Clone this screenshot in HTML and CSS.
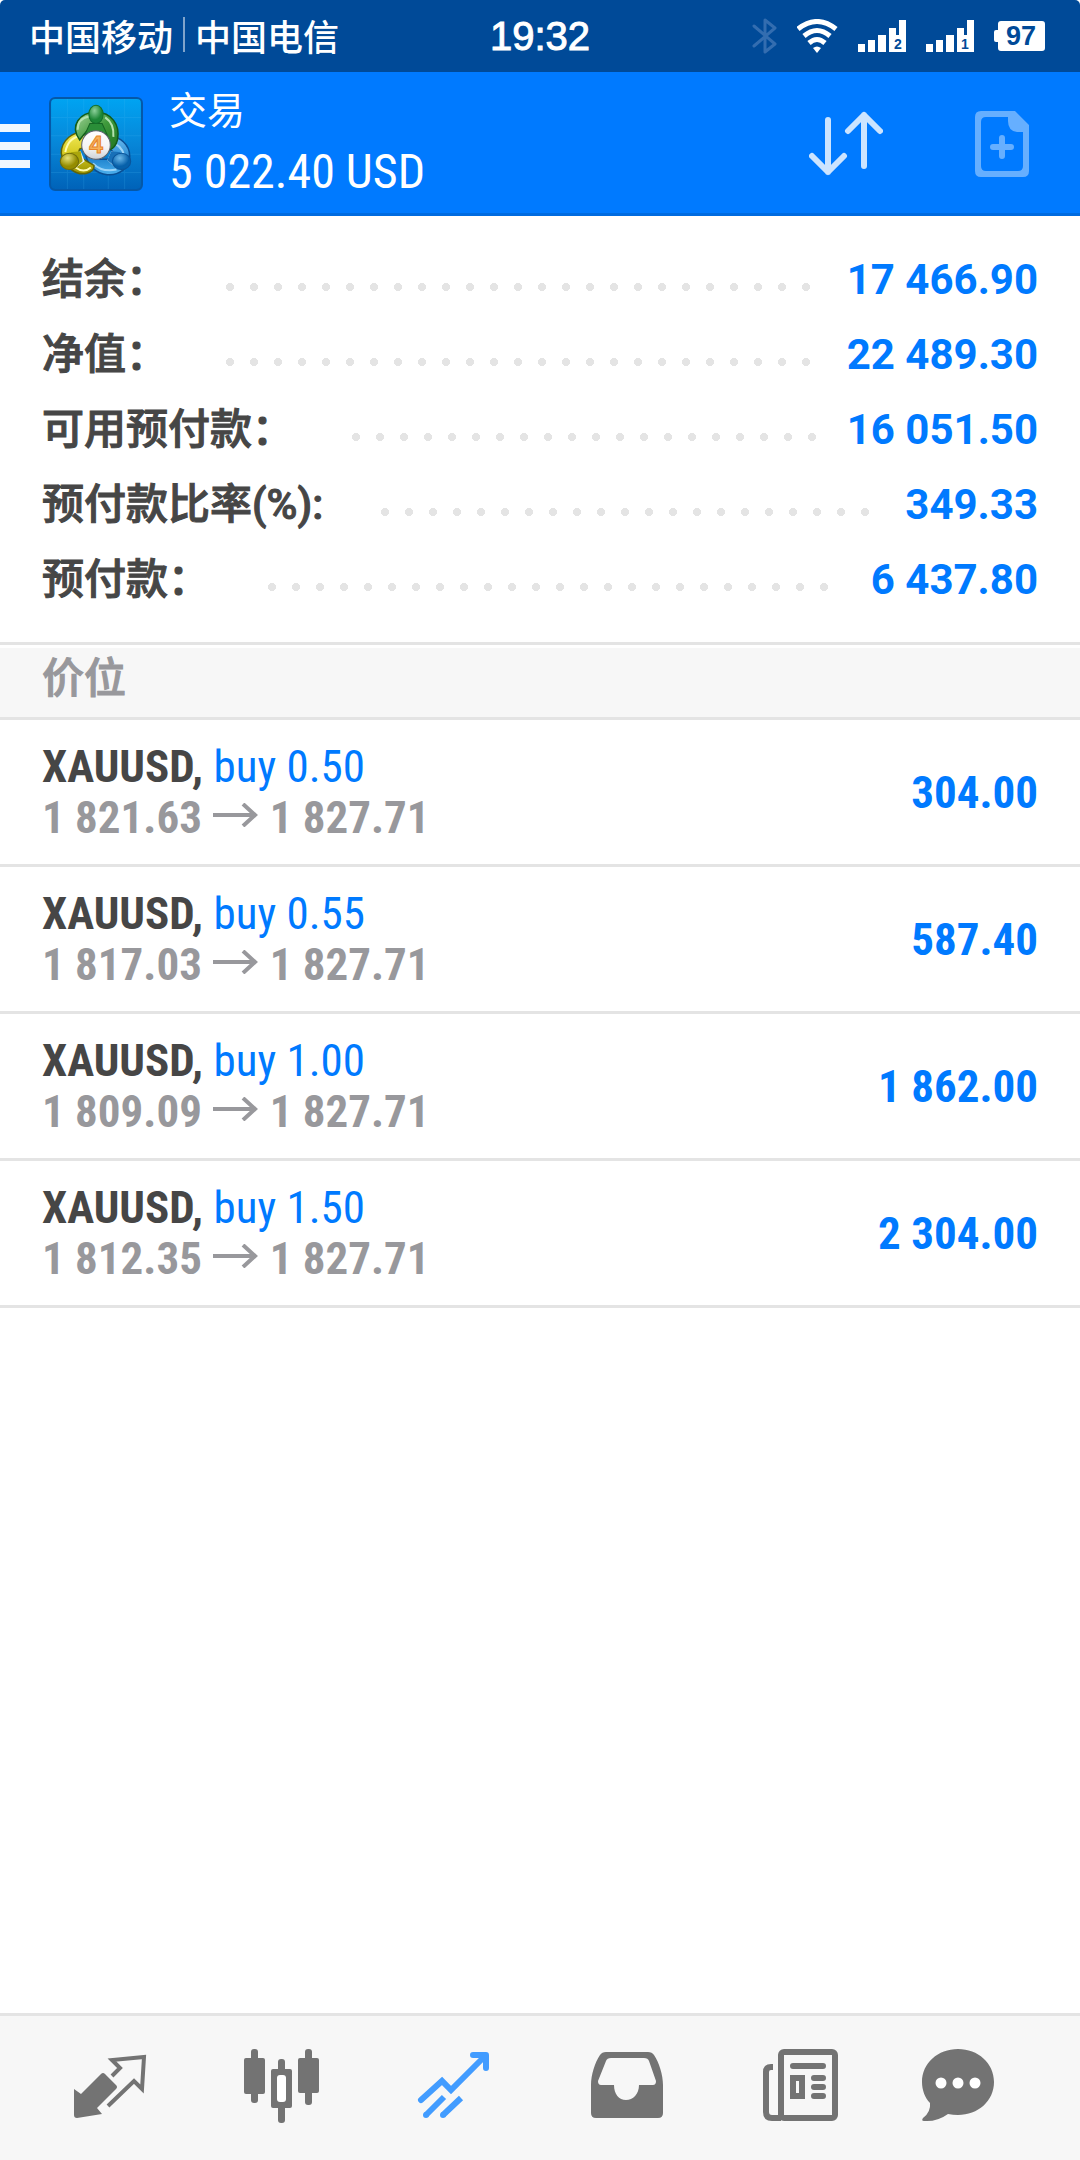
FILE: index.html
```html
<!DOCTYPE html>
<html lang="zh-CN">
<head>
<meta charset="utf-8">
<meta name="viewport" content="width=device-width, initial-scale=1">
<title>交易</title>
<link rel="stylesheet" href="styles.css">
</head>
<body>
<div class="status-bar">
  <div class="carriers"><span>中国移动</span><span class="divider"></span><span>中国电信</span></div>
  <time class="clock">19:32</time>
  <div class="indicators">
    <svg class="bluetooth" width="26" height="36" viewBox="0 0 26 36"><path d="M3 8 24 26 14 34V2L24 10 3 28" fill="none" stroke="#336db0" stroke-width="3" stroke-linecap="round" stroke-linejoin="round"/></svg>
    <svg class="wifi" width="41" height="34" viewBox="0 0 41 34"><g fill="none" stroke="#fff" stroke-width="5"><path d="M1 10Q20-5 39 10"/><path d="M7 17Q20 6 33 17"/><path d="M12 24Q20 17 28 24"/></g><path d="M16 29Q20 26 24 29L20 34Z" fill="#fff"/></svg>
    <svg class="signal" width="48" height="32" viewBox="0 0 48 32"><path d="M0 24h7v8H0zM10 20h7v12h-7zM20 15h8v17h-8zM31 8h7v7h3V0h7v32H31z" fill="#fff"/><text x="40" y="29" class="sim">2</text></svg>
    <svg class="signal" width="48" height="32" viewBox="0 0 48 32"><path d="M0 24h7v8H0zM10 20h7v12h-7zM20 15h8v17h-8zM31 8h7v7h3V0h7v32H31z" fill="#fff"/><text x="39" y="29" class="sim">1</text></svg>
    <svg class="battery" width="51" height="30" viewBox="0 0 51 30"><path d="M7 0H48Q51 0 51 3V27Q51 30 48 30H7Q4 30 4 27V21H2Q0 21 0 19V11Q0 9 2 9H4V3Q4 0 7 0Z" fill="#fff"/><text x="27" y="24" class="charge">97</text></svg>
  </div>
</div>

<header class="app-bar">
  <button class="menu" aria-label="菜单"><svg width="30" height="44" viewBox="0 0 30 44"><path d="M0 0H30V8H0zM0 18H30V26H0zM0 36H30V44H0z" fill="#f0f7ff"/></svg></button>
  <svg class="logo" width="94" height="94" viewBox="0 0 92 92">
    <defs>
      <linearGradient id="bg" x1="0" y1="0" x2="0" y2="1"><stop offset="0" stop-color="#00a4f2"/><stop offset=".5" stop-color="#0786d8"/><stop offset="1" stop-color="#0062b8"/></linearGradient>
      <linearGradient id="gr" x1="0" y1="0" x2="1" y2="1"><stop offset="0" stop-color="#a5d49c"/><stop offset=".5" stop-color="#3f9a3c"/><stop offset="1" stop-color="#1f7420"/></linearGradient>
      <linearGradient id="ye" x1="0" y1="0" x2="0" y2="1"><stop offset="0" stop-color="#f2ea58"/><stop offset=".5" stop-color="#d6cb22"/><stop offset="1" stop-color="#999100"/></linearGradient>
      <linearGradient id="bl" x1="0" y1="0" x2="0" y2="1"><stop offset="0" stop-color="#6cbcf0"/><stop offset=".6" stop-color="#2286d0"/><stop offset="1" stop-color="#4cb0ee"/></linearGradient>
      <radialGradient id="gh" cx=".4" cy=".3"><stop offset="0" stop-color="#8cd09a"/><stop offset="1" stop-color="#1d8636"/></radialGradient>
      <radialGradient id="yh" cx=".4" cy=".3"><stop offset="0" stop-color="#e6e278"/><stop offset="1" stop-color="#948c00"/></radialGradient>
      <radialGradient id="bh" cx=".4" cy=".3"><stop offset="0" stop-color="#6cb8ea"/><stop offset="1" stop-color="#0660aa"/></radialGradient>
      <linearGradient id="nu" x1="0" y1="0" x2="0" y2="1"><stop offset="0" stop-color="#fff"/><stop offset=".6" stop-color="#f4f4f4"/><stop offset="1" stop-color="#ccd0d6"/></linearGradient>
    </defs>
    <rect x="1" y="1" width="90" height="90" rx="5" fill="url(#bg)" stroke="#0558a8" stroke-width="2"/>
    <path d="M18 2V90M34 2V90M58 2V90M74 2V90M2 20H90M2 38H90M2 56H90M2 74H90" stroke="#4fbcf5" stroke-opacity=".18"/>
    <path d="M58 39C70 38 79 47 79 58C79 70 68 77 57 76C46 75 38 67 36 57L46 61L62 61Q68 56 58 50Z" fill="url(#bl)" stroke="#0a4f94" stroke-width="1.500"/>
    <path d="M59 44Q71 46 74 58M43 65Q52 74 66 71" fill="none" stroke="#9bd4f8" stroke-width="2"/>
    <path d="M38 35C23 32 12 43 12 55Q13 64 22 71C32 79 45 74 44 67L34 61Q27 57 30 51L40 47Z" fill="url(#ye)" stroke="#5f6408" stroke-width="1.500"/>
    <path d="M34 38Q19 38 16 54M26 69Q34 75 41 69" fill="none" stroke="#fffcae" stroke-width="2"/>
    <path d="M30 42C20 28 30 15 46 15C61 15 70 27 67 42Q65 50 59 52L50 35L46 30L39 31L34 37Z" fill="url(#gr)" stroke="#125c1a" stroke-width="1.500"/>
    <path d="M28 32Q28 21 39 19M55 20Q64 26 63 39" fill="none" stroke="#b4e2ae" stroke-width="2"/>
    <path d="M40 26L35 37Q46 30 57 37L52 26Z" fill="#2a8e38" stroke="#176624"/>
    <path d="M23 55L31 53L35 63L25 70ZM70 55L61 53L57 62L66 70Z" fill="#e8f2f8"/>
    <path d="M21 54L31 53L33 63L26 69Z" fill="#aba60c"/><path d="M70 54L61 53L57 62L66 69Z" fill="#1870b8"/>
    <ellipse cx="46" cy="17" rx="7" ry="9" fill="url(#gh)" stroke="#14702a"/>
    <ellipse cx="20" cy="63" rx="9" ry="8" fill="url(#yh)" stroke="#716d0a"/>
    <ellipse cx="71" cy="63" rx="9" ry="8" fill="url(#bh)" stroke="#0a549a"/>
    <circle cx="46" cy="47" r="14" fill="url(#nu)" stroke="#5d6470"/>
    <text x="46" y="55" class="logo-digit">4</text>
  </svg>
  <div class="titles"><h1>交易</h1><p>5 022.40 USD</p></div>
  <button aria-label="排序"><svg width="74" height="66" viewBox="0 0 74 66"><path d="M19 9V61M3 45 19 61 35 45M55 55V4M39 20 55 4 71 20" fill="none" stroke="#cce4ff" stroke-width="6" stroke-linecap="round" stroke-linejoin="round"/></svg></button>
  <button aria-label="新订单"><svg width="54" height="66" viewBox="0 0 54 66"><path fill-rule="evenodd" d="M6 0H40L54 14V60Q54 66 48 66H6Q0 66 0 60V6Q0 0 6 0ZM33 6H11Q6 6 6 11V55Q6 60 11 60H43Q48 60 48 55V21H42Q33 20 33 10Z" fill="#66afff"/><path d="M18 36H36M27 27V45" stroke="#66afff" stroke-width="6" stroke-linecap="round"/></svg></button>
</header>

<main>
  <dl class="summary">
    <div><dt>结余：</dt><dd>17 466.90</dd></div>
    <div><dt>净值：</dt><dd>22 489.30</dd></div>
    <div><dt>可用预付款：</dt><dd>16 051.50</dd></div>
    <div><dt>预付款比率(%):</dt><dd>349.33</dd></div>
    <div><dt>预付款：</dt><dd>6 437.80</dd></div>
  </dl>
  <h2>价位</h2>
  <ul class="positions">
    <li><div><p><b>XAUUSD,</b> <span class="side">buy 0.50</span></p><p class="prices">1 821.63 <svg class="to" width="45" height="24" viewBox="0 0 45 24"><path d="M0 12H42M30 1 42 12 30 23" fill="none" stroke="#98989c" stroke-width="4"/></svg> 1 827.71</p></div><strong>304.00</strong></li>
    <li><div><p><b>XAUUSD,</b> <span class="side">buy 0.55</span></p><p class="prices">1 817.03 <svg class="to" width="45" height="24" viewBox="0 0 45 24"><path d="M0 12H42M30 1 42 12 30 23" fill="none" stroke="#98989c" stroke-width="4"/></svg> 1 827.71</p></div><strong>587.40</strong></li>
    <li><div><p><b>XAUUSD,</b> <span class="side">buy 1.00</span></p><p class="prices">1 809.09 <svg class="to" width="45" height="24" viewBox="0 0 45 24"><path d="M0 12H42M30 1 42 12 30 23" fill="none" stroke="#98989c" stroke-width="4"/></svg> 1 827.71</p></div><strong>1 862.00</strong></li>
    <li><div><p><b>XAUUSD,</b> <span class="side">buy 1.50</span></p><p class="prices">1 812.35 <svg class="to" width="45" height="24" viewBox="0 0 45 24"><path d="M0 12H42M30 1 42 12 30 23" fill="none" stroke="#98989c" stroke-width="4"/></svg> 1 827.71</p></div><strong>2 304.00</strong></li>
  </ul>
</main>

<nav class="tabs">
  <a href="#quotes" aria-label="行情"><svg viewBox="0 0 80 80"><path d="M4 41 11 46 31 26Q33 24 35 26L46 37Q48 39 46 41L27 60 32 66 7 70Q4 70 4 67Z" fill="#737373"/><path d="M42 28 50 20 42 12 74 9 72 41 64 33 38 58" fill="none" stroke="#737373" stroke-width="4"/></svg></a>
  <a href="#charts" aria-label="图表"><svg viewBox="0 0 80 80"><g fill="#737373"><rect x="2" y="10" width="21" height="36" rx="2"/><rect x="9" y="1" width="7" height="54" rx="3"/><rect x="56" y="10" width="21" height="35" rx="2"/><rect x="63" y="1" width="7" height="56" rx="3"/><rect x="36" y="11" width="7" height="64" rx="3"/><rect x="29" y="21" width="21" height="39" rx="2"/></g><rect x="35" y="27" width="9" height="27" rx="3" fill="#fff"/></svg></a>
  <a href="#trade" aria-label="交易" aria-current="page"><svg viewBox="0 0 80 80"><g fill="none" stroke="#429cff" stroke-width="6"><path d="M7 52 28 33 37 42 71 8" stroke-linecap="round"/><path d="M59 7H72V20" stroke-linejoin="round" stroke-linecap="round"/><path d="M12 67 30 49M29 67 47 50"/></g><circle cx="12" cy="67" r="3" fill="#429cff"/><circle cx="29" cy="67" r="3" fill="#429cff"/></svg></a>
  <a href="#history" aria-label="历史"><svg viewBox="0 0 80 80"><path fill-rule="evenodd" d="M5 37C5 27 9 14 14 7Q16 4 20 4H62Q66 4 68 7C73 14 77 27 77 37V65Q77 70 72 70H10Q5 70 5 65ZM25 10Q21 10 20 13L12 33Q12 37 15 37H28C28 46 33 52 40 52S53 46 53 37H67Q70 37 70 33L63 13Q62 10 58 10Z" fill="#737373"/></svg></a>
  <a href="#news" aria-label="新闻"><svg viewBox="0 0 80 80"><g fill="none" stroke="#737373" stroke-width="6"><rect x="23" y="4" width="54" height="66" rx="3"/><path d="M15 19H13Q8 19 8 24V64Q8 70 14 70H23"/><path d="M35 18H65M56 30H65M56 39H65M56 48H65" stroke-linecap="round"/><rect x="35" y="30" width="9" height="18"/></g></svg></a>
  <a href="#chat" aria-label="聊天"><svg viewBox="0 0 80 80"><path d="M40 1C60 1 76 15 76 34S60 67 40 67Q35 67 30 66Q19 74 6 73Q3 73 5 70Q13 64 12 55C7 50 4 42 4 34C4 15 20 1 40 1Z" fill="#737373"/><g fill="#fff"><circle cx="23" cy="35" r="5.500"/><circle cx="40" cy="35" r="5.500"/><circle cx="57" cy="35" r="5.500"/></g></svg></a>
</nav>
</body>
</html>
```
FILE: styles.css
```css
* { box-sizing: border-box; margin: 0; padding: 0; }

body {
  min-height: 100vh;
  display: flex;
  flex-direction: column;
  background: #fff;
  color: #464646;
  font-family: Roboto, "Noto Sans CJK SC", sans-serif;
  font-size: 45px;
}

button { border: 0; background: none; display: flex; cursor: pointer; }
svg { display: block; flex: none; }

.status-bar {
  height: 72px;
  display: grid;
  grid-template-columns: 1fr auto 1fr;
  align-items: center;
  padding: 0 29px;
  background: #004a98;
  border-radius: 5px 5px 0 0;
  color: #fff;
}
.carriers {
  display: flex;
  align-items: center;
  gap: 10px;
  padding-bottom: 3px;
  font: 500 36px/52px "Noto Sans CJK SC", sans-serif;
}
.divider { width: 2px; height: 35px; background: #80a4cb; }
.clock {
  font: 40px/44px "Liberation Sans", sans-serif;
  -webkit-text-stroke: 1px currentColor;
}
.indicators {
  display: flex;
  justify-content: flex-end;
  align-items: center;
  gap: 20px;
  padding-right: 6px;
}
.sim { font: bold 14px "Liberation Sans", sans-serif; fill: #004a98; text-anchor: middle; }
.charge { font: bold 27px "Liberation Sans", sans-serif; fill: #004a98; text-anchor: middle; }

.app-bar {
  height: 144px;
  display: flex;
  align-items: center;
  padding-right: 51px;
  background: #007aff;
  box-shadow: inset 0 -3px #006be0;
  color: #fff;
}
.menu { margin-right: 19px; padding-top: 4px; }
.app-bar button:last-child { margin-left: 92px; }
.logo-digit { font: bold 24px "Liberation Sans", sans-serif; fill: #f6b25a; stroke: #e8842a; text-anchor: middle; }
.titles { flex: 1; margin-left: 26px; }
.titles h1 { font: 400 38px/56px "Noto Sans CJK SC", sans-serif; }
.titles p { font: 400 48px/72px "Roboto Condensed", Roboto, sans-serif; }

.summary { padding: 26px 42px 25px; }
.summary div { height: 75px; display: flex; align-items: center; font-size: 42px; line-height: 60px; }
.summary dt { order: 1; font-weight: 500; -webkit-text-stroke: 1px currentColor; }
.summary div::before {
  content: "";
  order: 2;
  flex: 1;
  height: 8px;
  margin: 14px 30px 0 42px;
  background: radial-gradient(circle at 20px 4px, #e4e4e4 4px, #e4e4e400 4px) 0 0 / 24px 8px repeat-x;
}
.summary dd { order: 3; font-weight: 700; color: #007aff; }

h2 {
  padding: 0 42px 12px;
  border-top: 3px solid #e4e4e4;
  border-bottom: 3px solid #e4e4e4;
  background: linear-gradient(#fff 3px, #f7f7f7 3px);
  color: #98989c;
  font: 500 42px/60px "Noto Sans CJK SC", sans-serif;
  -webkit-text-stroke: 1px currentColor;
}
.positions { list-style: none; font-family: "Roboto Condensed", Roboto, sans-serif; line-height: 51px; }
.positions li {
  height: 147px;
  display: flex;
  align-items: center;
  justify-content: space-between;
  padding: 0 42px;
  border-bottom: 3px solid #e4e4e4;
}
.side, .positions strong { color: #007aff; }
.prices { color: #98989c; font-weight: 700; }
.to { display: inline-block; margin: 0 1px; vertical-align: 6px; }

.tabs {
  height: 147px;
  margin-top: auto;
  display: grid;
  grid-template-columns: repeat(5, 172fr) 148fr;
  align-items: center;
  justify-items: center;
  padding: 0 48px 0 24px;
  border-top: 3px solid #e4e4e4;
  background: #f7f7f7;
}
.tabs svg { width: 80px; height: 80px; }
```
